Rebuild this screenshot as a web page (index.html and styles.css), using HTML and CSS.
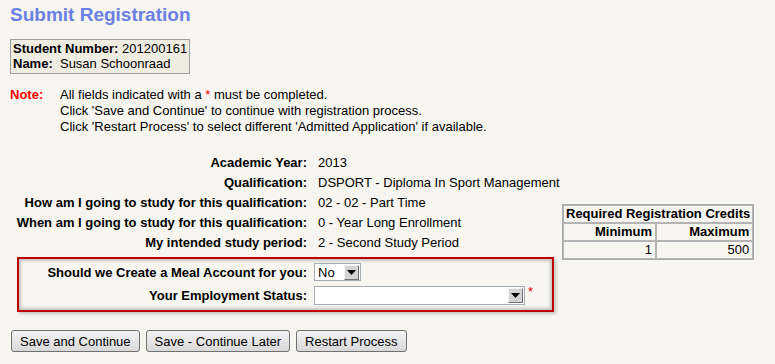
FILE: index.html
```html
<html lang="en">
<head>
    <title>Submit Registration</title>
    <link rel="stylesheet" href="styles.css">
</head>
<body>
    <div class="page">
        <h1 class="title">Submit Registration</h1>

        <div class="student">
            <div><b>Student Number:</b> 201200161</div>
            <div><b>Name:</b>&nbsp; Susan Schoonraad</div>
        </div>

        <div class="note">
            <span class="note-label">Note:</span>
            <div class="note-text">
                <div>All fields indicated with a <span class="req">*</span> must be completed.</div>
                <div>Click 'Save and Continue' to continue with registration process.</div>
                <div>Click 'Restart Process' to select different 'Admitted Application' if available.</div>
            </div>
        </div>

        <div class="details">
            <div class="details-main">
                <div class="info">
                    <span class="info-label">Academic Year:</span>
                    <span>2013</span>
                    <span class="info-label">Qualification:</span>
                    <span>DSPORT - Diploma In Sport Management</span>
                    <span class="info-label">How am I going to study for this qualification:</span>
                    <span>02 - 02 - Part Time</span>
                    <span class="info-label">When am I going to study for this qualification:</span>
                    <span>0 - Year Long Enrollment</span>
                    <span class="info-label">My intended study period:</span>
                    <span>2 - Second Study Period</span>
                </div>

                <!-- fields that still need an answer -->
                <div class="options">
                    <span class="info-label">Should we Create a Meal Account for you:</span>
                    <div class="field">
                        <div class="select select-short">
                            <span class="select-value">No</span>
                            <span class="select-btn"><svg width="9" height="5" viewBox="0 0 9 5"><path d="M0 0h9L4.5 5z" fill="#000"/></svg></span>
                        </div>
                    </div>
                    <span class="info-label">Your Employment Status:</span>
                    <div class="field">
                        <div class="select select-long">
                            <span class="select-value"></span>
                            <span class="select-btn"><svg width="9" height="5" viewBox="0 0 9 5"><path d="M0 0h9L4.5 5z" fill="#000"/></svg></span>
                        </div>
                        <span class="req star">*</span>
                    </div>
                </div>
            </div>

            <table class="credits">
                <tr>
                    <th class="head" colspan="2">Required Registration Credits</th>
                </tr>
                <tr>
                    <th class="num col-min">Minimum</th>
                    <th class="num">Maximum</th>
                </tr>
                <tr>
                    <td class="num">1</td>
                    <td class="num">500</td>
                </tr>
            </table>
        </div>

        <div class="actions">
            <button class="btn">Save and Continue</button>
            <button class="btn">Save - Continue Later</button>
            <button class="btn">Restart Process</button>
        </div>
    </div>
</body>
</html>
```

FILE: styles.css
```css
body {
    margin: 0;
    background-color: #f6f5ef;
    font-family: "Liberation Sans", Arial, sans-serif;
    font-size: 13px;
    color: #000;
}
.page {
    padding: 4px 10px;
}
.title {
    margin: 0;
    font-size: 19px;
    line-height: 22px;
    font-weight: bold;
    color: #6a80e4;
}
.student {
    display: inline-block;
    margin-top: 13px;
    padding: 1px 2px 2px 2px;
    line-height: 15px;
    border: 1px solid #a0a0a0;
    background-color: #efece2;
}
.note {
    display: flex;
    margin-top: 13px;
    line-height: 16px;
}
.note-label {
    width: 50px;
    font-weight: bold;
    color: #f00;
}
.req {
    color: #f00;
}
.details {
    display: flex;
    gap: 8px;
    margin-top: 17px;
}
.details-main {
    width: 544px;
}
.info {
    display: grid;
    grid-template-columns: 297px auto;
    column-gap: 11px;
    grid-auto-rows: 20px;
    align-items: center;
    white-space: nowrap;
}
.info-label {
    text-align: right;
    font-weight: bold;
}
.options {
    display: grid;
    grid-template-columns: 288px auto;
    column-gap: 7px;
    row-gap: 5px;
    align-items: center;
    margin: 5px 0 0 7px;
    padding: 4px 0 5px 0;
    border: 2px solid #c00000;
    box-shadow: inset 0 0 3px 2px #c4c4c4, 2px 2px 3px #c4c4c4;
    white-space: nowrap;
}
.field {
    display: flex;
    align-items: center;
}
.select {
    display: flex;
    align-items: center;
    box-sizing: border-box;
    border: 1px solid #a5acb2;
    background-color: #fff;
}
.select-short {
    width: 47px;
    height: 18px;
}
.select-long {
    width: 211px;
    height: 19px;
}
.select-value {
    flex: 1;
    padding-left: 3px;
}
.select-btn {
    display: flex;
    align-items: center;
    justify-content: center;
    box-sizing: border-box;
    width: 15px;
    height: 15px;
    margin-right: 1px;
    border: 1px solid;
    border-color: #f4f4f4 #707070 #707070 #f4f4f4;
    background-color: #d4d4d4;
}
.star {
    margin-left: 3px;
    align-self: flex-start;
    line-height: 12px;
}
.credits {
    align-self: flex-start;
    margin-top: 52px;
    width: 192px;
    border-collapse: separate;
    border-spacing: 0;
    border: 1px solid #aaa;
    font-size: 13px;
    white-space: nowrap;
}
.credits th,
.credits td {
    padding: 0 3px;
    line-height: 16px;
    border: 1px solid #b4b4b4;
}
.credits th {
    font-weight: bold;
}
.credits .head {
    padding: 0 2px;
    text-align: center;
}
.credits .num {
    text-align: right;
}
.credits .col-min {
    width: 85px;
}
.actions {
    display: flex;
    gap: 6px;
    margin-top: 18px;
    padding-left: 1px;
}
.btn {
    height: 22px;
    padding: 0 8px;
    font-family: "Liberation Sans", Arial, sans-serif;
    font-size: 13px;
    color: #000;
    border: 1px solid #707070;
    border-radius: 3px;
    background: linear-gradient(#f2f2f2, #e6e6e6 50%, #d8d8d8);
}
```
